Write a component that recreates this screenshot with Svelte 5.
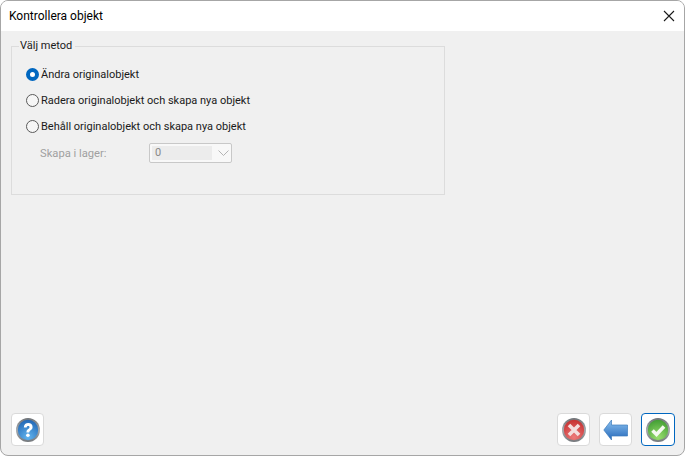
<script>
  const options = [
    { label: 'Ändra originalobjekt', checked: true },
    { label: 'Radera originalobjekt och skapa nya objekt', checked: false },
    { label: 'Behåll originalobjekt och skapa nya objekt', checked: false }
  ];
</script>

<div class="window">
  <header class="titlebar">
    <span class="title">Kontrollera objekt</span>
    <button class="close" aria-label="Stäng">
      <svg width="12" height="12" viewBox="0 0 12 12"><path d="M1 1 L11 11 M11 1 L1 11" stroke="#1a1a1a" stroke-width="1.1" fill="none"/></svg>
    </button>
  </header>

  <main class="content">
    <fieldset class="group">
      <legend>Välj metod</legend>
      {#each options as opt}
        <div class="radio-row">
          <span class="radio" class:checked={opt.checked}></span>
          <span>{opt.label}</span>
        </div>
      {/each}
      <div class="layer-row">
        <span class="layer-label">Skapa i lager:</span>
        <div class="combo">
          <span class="combo-value">0</span>
          <svg class="chevron" width="11" height="6" viewBox="0 0 11 6"><path d="M0.5 0.5 L5.5 5.5 L10.5 0.5" stroke="#b4b4b4" stroke-width="1" fill="none"/></svg>
        </div>
      </div>
    </fieldset>
  </main>

  <footer class="footer">
    <button class="tool" aria-label="Hjälp">
      <svg width="26" height="26" viewBox="0 0 26 26">
        <defs>
          <linearGradient id="ring" x1="0" y1="0" x2="0" y2="1"><stop offset="0" stop-color="#6e7276"/><stop offset="0.5" stop-color="#a8acb0"/><stop offset="1" stop-color="#74787c"/></linearGradient>
          <radialGradient id="blue" cx="0.5" cy="0.85" r="0.9"><stop offset="0" stop-color="#62b4ee"/><stop offset="1" stop-color="#1d62b2"/></radialGradient>
        </defs>
        <circle cx="13" cy="13" r="12" fill="url(#ring)"/>
        <circle cx="13" cy="13" r="10.2" fill="url(#blue)"/>
        <path d="M8.8 10.4 C8.9 7.4 10.8 6 13.2 6 C15.8 6 17.6 7.6 17.6 9.9 C17.6 11.7 16.5 12.6 15.4 13.4 C14.5 14 14.3 14.5 14.3 15.5 H11.5 C11.4 13.7 12 12.8 13.1 12 C14 11.4 14.5 11 14.5 10.2 C14.5 9.4 14 8.9 13.1 8.9 C12.2 8.9 11.7 9.5 11.6 10.6 Z" fill="#fff"/>
        <circle cx="12.9" cy="18.2" r="1.8" fill="#fff"/>
      </svg>
    </button>
    <div class="actions">
      <button class="tool" aria-label="Avbryt">
        <svg width="26" height="26" viewBox="0 0 26 26">
          <defs>
            <radialGradient id="red" cx="0.5" cy="0.85" r="0.9"><stop offset="0" stop-color="#ec7a7a"/><stop offset="1" stop-color="#c42c2c"/></radialGradient>
          </defs>
          <circle cx="13" cy="13" r="12" fill="url(#ring)"/>
          <circle cx="13" cy="13" r="10.2" fill="url(#red)"/>
          <path d="M8 8 L18 18 M18 8 L8 18" stroke="#f3dede" stroke-width="3.6" fill="none"/>
        </svg>
      </button>
      <button class="tool" aria-label="Tillbaka">
        <svg width="25" height="22" viewBox="0 0 25 22">
          <defs>
            <linearGradient id="arrow" x1="0" y1="0" x2="0" y2="1"><stop offset="0" stop-color="#8cc2f0"/><stop offset="1" stop-color="#2468ba"/></linearGradient>
          </defs>
          <path d="M0.8 11 L8.5 1 V6 H24.5 V17 H8.5 V21 Z" fill="url(#arrow)" stroke="#3d7cbc" stroke-width="0.7"/>
        </svg>
      </button>
      <button class="tool focused" aria-label="OK">
        <svg width="26" height="26" viewBox="0 0 26 26">
          <defs>
            <radialGradient id="green" cx="0.5" cy="0.85" r="0.9"><stop offset="0" stop-color="#9ade70"/><stop offset="1" stop-color="#3c9a30"/></radialGradient>
          </defs>
          <circle cx="13" cy="13" r="12" fill="url(#ring)"/>
          <circle cx="13" cy="13" r="10.2" fill="url(#green)"/>
          <path d="M7.5 13.5 L11.5 17.5 L19 9.5" stroke="#f4faf0" stroke-width="3.6" fill="none"/>
        </svg>
      </button>
    </div>
  </footer>
</div>

<style>
  :global(body) {
    margin: 0;
    background: #fff;
  }
  .window {
    width: 685px;
    height: 456px;
    box-sizing: border-box;
    display: flex;
    flex-direction: column;
    background: #f0f0f0;
    border: 1px solid #a6a6a6;
    border-radius: 8px;
    overflow: hidden;
    font-family: Roboto, "Open Sans", sans-serif;
    font-size: 11px;
    color: #1a1a1a;
  }
  .titlebar {
    height: 30px;
    flex: none;
    display: flex;
    align-items: center;
    justify-content: space-between;
    background: #fff;
    padding: 0 9px 0 8px;
  }
  .title {
    font-size: 12px;
    color: #000;
  }
  button {
    padding: 0;
    background: #fff;
    display: flex;
    align-items: center;
    justify-content: center;
  }
  .close {
    border: 0;
    width: 12px;
    height: 12px;
  }
  .content {
    flex: 1;
    padding: 7px 10px 0;
  }
  .group {
    width: 434px;
    height: 157px;
    box-sizing: border-box;
    margin: 0;
    padding: 7px 14px 0;
    border: 1px solid #dcdcdc;
    min-inline-size: 0;
  }
  legend {
    margin-left: -7px;
    padding: 0 3px 0 1px;
    line-height: 16px;
    color: #1a1a1a;
  }
  .radio-row {
    height: 26px;
    display: flex;
    align-items: center;
    gap: 2px;
  }
  .radio {
    width: 13px;
    height: 13px;
    box-sizing: border-box;
    border: 1px solid #5a5a5a;
    border-radius: 50%;
    background: #f6f6f6;
  }
  .radio.checked {
    border: 4px solid #0067c0;
    background: #fff;
  }
  .layer-row {
    height: 28px;
    display: flex;
    align-items: center;
    padding-left: 14px;
  }
  .layer-label {
    width: 109px;
    color: #a0a0a0;
    font-size: 11.2px;
  }
  .combo {
    width: 83px;
    height: 20px;
    box-sizing: border-box;
    border: 1px solid #c8c8c8;
    border-radius: 2px;
    background: #f8f8f8;
    display: flex;
    align-items: center;
    padding: 2px;
    gap: 6px;
  }
  .combo-value {
    width: 60px;
    height: 100%;
    background: #ececec;
    color: #888;
    line-height: 14px;
    padding-left: 3px;
    box-sizing: border-box;
  }
  .footer {
    flex: none;
    display: flex;
    justify-content: space-between;
    align-items: center;
    padding: 0 9px 9px 10px;
  }
  .actions {
    display: flex;
    gap: 9px;
  }
  .tool {
    width: 33px;
    height: 33px;
    box-sizing: border-box;
    border: 1px solid #dadada;
    border-radius: 4px;
  }
  .tool.focused {
    width: 34px;
    border: 1px solid #0067c0;
  }
</style>
